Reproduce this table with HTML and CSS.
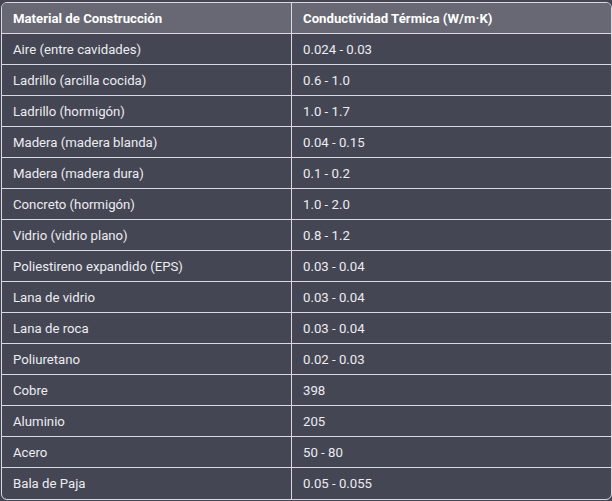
FILE: index.html
```html
<!DOCTYPE html>
<html lang="es">
<head>
<meta charset="utf-8">
<title>Conductividad térmica</title>
<link rel="stylesheet" href="styles.css">
</head>
<body>
<div class="wrap">
<table class="tbl">
<thead>
<tr><th>Material de Construcción</th><th>Conductividad Térmica (W/m·K)</th></tr>
</thead>
<tbody>
<tr><td>Aire (entre cavidades)</td><td>0.024 - 0.03</td></tr>
<tr><td>Ladrillo (arcilla cocida)</td><td>0.6 - 1.0</td></tr>
<tr><td>Ladrillo (hormigón)</td><td>1.0 - 1.7</td></tr>
<tr><td>Madera (madera blanda)</td><td>0.04 - 0.15</td></tr>
<tr><td>Madera (madera dura)</td><td>0.1 - 0.2</td></tr>
<tr><td>Concreto (hormigón)</td><td>1.0 - 2.0</td></tr>
<tr><td>Vidrio (vidrio plano)</td><td>0.8 - 1.2</td></tr>
<tr><td>Poliestireno expandido (EPS)</td><td>0.03 - 0.04</td></tr>
<tr><td>Lana de vidrio</td><td>0.03 - 0.04</td></tr>
<tr><td>Lana de roca</td><td>0.03 - 0.04</td></tr>
<tr><td>Poliuretano</td><td>0.02 - 0.03</td></tr>
<tr><td>Cobre</td><td>398</td></tr>
<tr><td>Aluminio</td><td>205</td></tr>
<tr><td>Acero</td><td>50 - 80</td></tr>
<tr><td>Bala de Paja</td><td>0.05 - 0.055</td></tr>
</tbody>
</table>
</div>
</body>
</html>
```
FILE: styles.css
```css
html, body {
  margin: 0;
  padding: 0;
  background: #444654;
}
body {
  font-family: Roboto, "Noto Sans", sans-serif;
  font-size: 13.2px;
  color: #ececf1;
}
.wrap {
  padding: 2px 0 0 1px;
}
.tbl {
  width: 611px;
  border-collapse: separate;
  border-spacing: 0;
  border: 1px solid #d9d9e3;
  border-radius: 6px;
  overflow: hidden;
  table-layout: fixed;
}
.tbl th, .tbl td {
  height: 31px;
  padding: 0 11px;
  text-align: left;
  vertical-align: middle;
  border-bottom: 1px solid #d9d9e3;
  box-sizing: border-box;
  white-space: nowrap;
}
.tbl th:first-child, .tbl td:first-child {
  width: 290px;
  border-right: 1px solid #d9d9e3;
}
.tbl tr:last-child td {
  border-bottom: 0;
}
.tbl thead th {
  background: #676873;
  color: #ffffff;
  font-weight: 700;
}
```
